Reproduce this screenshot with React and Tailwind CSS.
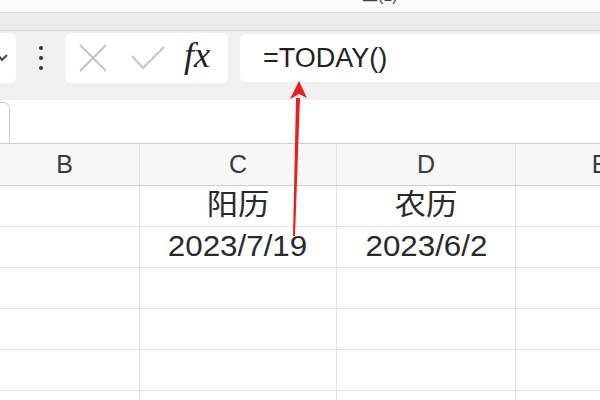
export default function App() {
  const font = { fontFamily: '"Liberation Sans", "Noto Sans CJK SC", sans-serif' };
  const rows = [
    ["", "阳历", "农历", ""],
    ["", "2023/7/19", "2023/6/2", ""],
    ["", "", "", ""],
    ["", "", "", ""],
    ["", "", "", ""],
    ["", "", "", ""],
  ];

  return (
    <div className="relative w-[600px] h-[400px] overflow-hidden bg-white" style={font}>
      {/* window title strip */}
      <div className="h-[12px] bg-[#fbfbfb] flex overflow-hidden">
        <span className="ml-[362px] -mt-[12px] text-[16px] text-[#444] leading-none">工(1)</span>
      </div>
      <div className="h-[19px] bg-[#ececec] border-y border-[#d6d6d6]" />

      {/* formula bar */}
      <div className="h-[69px] bg-[#f0f0f0] flex items-start pt-[2px]">
        <div className="w-[16px] shrink-0 h-[50px] bg-white rounded-r-[6px] flex items-center">
          <svg width="10" height="10" viewBox="0 0 10 10" className="-ml-[2px]">
            <polyline points="1,3 4,7 9,2" fill="none" stroke="#444" strokeWidth="2" />
          </svg>
        </div>
        <div className="w-[49px] shrink-0 h-[50px] flex flex-col items-center justify-center gap-[6px]">
          <span className="w-[4px] h-[4px] rounded-full bg-[#333]" />
          <span className="w-[4px] h-[4px] rounded-full bg-[#333]" />
          <span className="w-[4px] h-[4px] rounded-full bg-[#333]" />
        </div>
        <div className="w-[163px] shrink-0 h-[50px] bg-white rounded-[6px] flex items-center pl-[13px]">
          <svg width="30" height="30" viewBox="0 0 30 30">
            <path d="M2 2 L28 28 M28 2 L2 28" stroke="#c4c4c4" strokeWidth="2" fill="none" />
          </svg>
          <svg width="36" height="28" viewBox="0 0 36 28" className="ml-[22px]">
            <polyline points="2,12 13,24 34,3" stroke="#c4c4c4" strokeWidth="2" fill="none" />
          </svg>
          <span
            className="ml-[18px] text-[36px] italic text-[#222] leading-none -mt-[6px]"
            style={{ fontFamily: '"Liberation Serif", serif' }}
          >
            fx
          </span>
        </div>
        <div className="ml-[12px] flex-1 h-[48px] mt-[1px] bg-white rounded-l-[6px] flex items-center pl-[23px]">
          <span className="text-[27px] text-[#222] leading-none">=TODAY()</span>
        </div>
      </div>

      {/* sheet tab area */}
      <div className="h-[44px] bg-white border-b border-[#cfcfcf] flex items-end">
        <div className="w-[10px] h-[41px] border-r border-t border-[#d0d0d0] rounded-tr-[6px]" />
      </div>

      {/* column headers */}
      <div className="flex h-[42px] bg-[#f7f7f7] border-b border-[#cfcfcf] text-[25px] text-[#3a3a3a]">
        <div className="w-[140px] shrink-0 border-r border-[#e2e2e2] flex items-center justify-center pr-[10px]">B</div>
        <div className="w-[197px] shrink-0 border-r border-[#e2e2e2] flex items-center justify-center">C</div>
        <div className="w-[179px] shrink-0 border-r border-[#e2e2e2] flex items-center justify-center">D</div>
        <div className="w-[168px] shrink-0 flex items-center justify-center">E</div>
      </div>

      {/* cells */}
      {rows.map((r, i) => (
        <div key={i} className="flex h-[41px] border-b border-[#e4e4e4] text-[29px] text-[#2a2a2a]">
          <div className="w-[140px] shrink-0 border-r border-[#e4e4e4]" />
          <div className="w-[197px] shrink-0 border-r border-[#e4e4e4] flex items-center justify-center">
            <span className="scale-x-[1.08]">{r[1]}</span>
          </div>
          <div className="w-[179px] shrink-0 border-r border-[#e4e4e4] flex items-center justify-center">
            <span className="scale-x-[1.08]">{r[2]}</span>
          </div>
          <div className="w-[168px] shrink-0" />
        </div>
      ))}

      {/* red annotation arrow */}
      <svg className="absolute left-0 top-0" width="600" height="400" viewBox="0 0 600 400">
        <path d="M296 98 L300 98 L295 236 L293 236 Z" fill="#e5201d" />
        <path d="M290 99 L299 81 L307 98 L299 94 Z" fill="#e5201d" />
      </svg>
    </div>
  );
}
